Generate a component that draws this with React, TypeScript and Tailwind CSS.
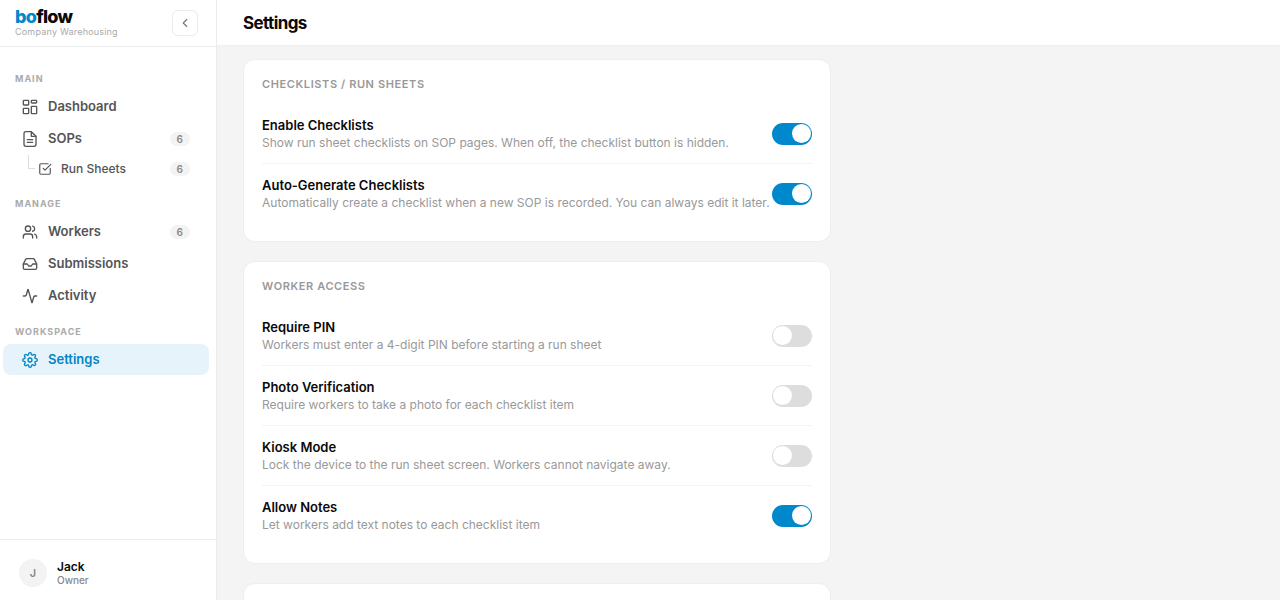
import { useState } from 'react'
import type { ComponentType, ReactNode } from 'react'
import { Activity, ChevronLeft, Inbox, SquareCheckBig, Users } from 'lucide-react'
import { FiSettings } from 'react-icons/fi'
import clsx from 'clsx'

interface IconProps {
    size?: number | string
}

interface NavItemProps {
    icon: ComponentType<IconProps>
    label: string
    count?: number
    active?: boolean
}

function DashboardIcon({ size = 16 }: IconProps) {
    return (
        <svg width={size} height={size} viewBox="0 0 24 24" fill="none" stroke="currentColor" strokeWidth="2" strokeLinejoin="round">
            <rect x="2" y="2" width="8" height="7" rx="1" />
            <rect x="14" y="2" width="8" height="4" rx="1" />
            <rect x="14" y="11" width="8" height="11" rx="1" />
            <rect x="2" y="14" width="8" height="8" rx="1" />
        </svg>
    )
}

function DocumentIcon({ size = 16 }: IconProps) {
    return (
        <svg
            width={size}
            height={size}
            viewBox="0 0 24 24"
            fill="none"
            stroke="currentColor"
            strokeWidth="2"
            strokeLinecap="round"
            strokeLinejoin="round"
        >
            <path d="M14 1H6a3 3 0 0 0-3 3v16a3 3 0 0 0 3 3h12a3 3 0 0 0 3-3V8z" />
            <path d="M14 1v7h7" />
            <path d="M8 13h8M8 17h8" />
        </svg>
    )
}

function Count({ value }: { value: number }) {
    return (
        <span className="ml-auto rounded-full bg-[#f3f3f3] px-[7px] text-[10px] leading-[14px] font-semibold text-[#888]">
            {value}
        </span>
    )
}

function NavItem({ icon: Icon, label, count, active }: NavItemProps) {
    return (
        <a
            href="#"
            aria-current={active ? 'page' : undefined}
            className={clsx(
                'flex h-[31px] items-center gap-[10px] rounded-lg px-[19px] text-[13px] font-semibold',
                active ? 'bg-[#e6f3fb] text-[#0284c7]' : 'text-[#555]'
            )}
        >
            <Icon size={16} />
            {label}
            {count !== undefined && <Count value={count} />}
        </a>
    )
}

function SubNavItem({ icon: Icon, label, count }: NavItemProps) {
    return (
        <a href="#" className="relative flex h-7 items-center gap-[9px] pr-[19px] pl-[35px] text-[12px] font-medium text-[#555]">
            <span className="absolute top-0 left-[25px] h-[14px] w-[7px] border-b border-l border-[#ddd]" />
            <Icon size={14} />
            {label}
            {count !== undefined && <Count value={count} />}
        </a>
    )
}

function NavGroup({ title, children }: { title: string; children: ReactNode }) {
    return (
        <div className="flex flex-col gap-px">
            <h2 className="px-3 pb-[5px] text-[9px] leading-3 font-bold tracking-[1px] text-[#aaa]">{title}</h2>
            {children}
        </div>
    )
}

function Sidebar() {
    return (
        <aside className="flex w-[217px] shrink-0 flex-col border-r border-[#ebebeb] bg-white">
            <div className="flex h-[47px] shrink-0 items-center justify-between border-b border-[#ebebeb] pr-[18px] pl-[15px]">
                <div>
                    <div className="text-[18px] leading-[18px] font-extrabold tracking-[-0.7px] text-[#0a0a0a]">
                        <span className="text-[#0088cc]">bo</span>flow
                    </div>
                    <div className="text-[9px] leading-3 tracking-[0.2px] text-[#aaa]">Company Warehousing</div>
                </div>
                <button
                    type="button"
                    aria-label="Collapse sidebar"
                    className="flex size-[26px] items-center justify-center rounded-md border border-[#ebebeb] text-[#777]"
                >
                    <ChevronLeft size={14} />
                </button>
            </div>
            <nav className="flex flex-1 flex-col gap-[15px] pt-[26px] pr-[7px] pl-[3px]">
                <NavGroup title="MAIN">
                    <NavItem icon={DashboardIcon} label="Dashboard" />
                    <NavItem icon={DocumentIcon} label="SOPs" count={6} />
                    <SubNavItem icon={SquareCheckBig} label="Run Sheets" count={6} />
                </NavGroup>
                <NavGroup title="MANAGE">
                    <NavItem icon={Users} label="Workers" count={6} />
                    <NavItem icon={Inbox} label="Submissions" />
                    <NavItem icon={Activity} label="Activity" />
                </NavGroup>
                <NavGroup title="WORKSPACE">
                    <NavItem icon={FiSettings} label="Settings" active />
                </NavGroup>
            </nav>
            <div className="flex shrink-0 items-center gap-[10px] border-t border-[#ebebeb] px-[19px] pt-[19px] pb-[13px]">
                <div className="flex size-7 items-center justify-center rounded-full bg-[#f3f3f3] text-[11px] font-semibold text-[#888]">
                    J
                </div>
                <div>
                    <div className="text-[12px] leading-[14px] font-semibold text-[#0a0a0a]">Jack</div>
                    <div className="text-[10px] leading-3 font-medium text-[#888]">Owner</div>
                </div>
            </div>
        </aside>
    )
}

interface SettingRowProps {
    id: string
    title: string
    description: string
    defaultOn?: boolean
}

function SettingRow({ id, title, description, defaultOn = false }: SettingRowProps) {
    const [on, setOn] = useState(defaultOn)

    return (
        <div className="flex items-center justify-between border-b border-[#f3f3f3] py-3 last:border-b-0">
            <div>
                <label htmlFor={id} className="block text-[13px] leading-[18px] font-semibold text-[#0a0a0a]">
                    {title}
                </label>
                <p id={`${id}-hint`} className="text-[12px] leading-[17px] text-[#999]">
                    {description}
                </p>
            </div>
            <input
                id={id}
                type="checkbox"
                role="switch"
                aria-describedby={`${id}-hint`}
                checked={on}
                onChange={(e) => setOn(e.target.checked)}
                className="flex h-[22px] w-10 shrink-0 cursor-pointer appearance-none items-center rounded-full bg-[#ddd] px-px before:size-[19px] before:rounded-full before:bg-white checked:justify-end checked:bg-[#0088cc]"
            />
        </div>
    )
}

function SettingsCard({ title, rows }: { title: string; rows: SettingRowProps[] }) {
    return (
        <section className="rounded-xl border border-[#eeeeee] bg-white p-[18px]">
            <h2 className="mb-[14px] text-[11px] leading-3 font-semibold tracking-[0.6px] text-[#999]">{title}</h2>
            <div>
                {rows.map((row) => (
                    <SettingRow key={row.id} {...row} />
                ))}
            </div>
        </section>
    )
}

const checklistRows: SettingRowProps[] = [
    {
        id: 'enable-checklists',
        title: 'Enable Checklists',
        description: 'Show run sheet checklists on SOP pages. When off, the checklist button is hidden.',
        defaultOn: true,
    },
    {
        id: 'auto-generate',
        title: 'Auto-Generate Checklists',
        description: 'Automatically create a checklist when a new SOP is recorded. You can always edit it later.',
        defaultOn: true,
    },
]

const accessRows: SettingRowProps[] = [
    { id: 'require-pin', title: 'Require PIN', description: 'Workers must enter a 4-digit PIN before starting a run sheet' },
    { id: 'photo', title: 'Photo Verification', description: 'Require workers to take a photo for each checklist item' },
    { id: 'kiosk', title: 'Kiosk Mode', description: 'Lock the device to the run sheet screen. Workers cannot navigate away.' },
    { id: 'notes', title: 'Allow Notes', description: 'Let workers add text notes to each checklist item', defaultOn: true },
]

export default function App() {
    return (
        <div className="flex h-screen bg-[#f4f4f4] font-['Inter',sans-serif]">
            <Sidebar />
            <div className="flex min-w-0 flex-1 flex-col">
                <header className="flex h-[46px] shrink-0 items-center border-b border-[#f0f0f0] bg-white px-[26px]">
                    <h1 className="text-[17px] leading-5 font-bold tracking-[-0.6px] text-[#0a0a0a]">Settings</h1>
                </header>
                <main className="flex-1 overflow-y-auto px-[26px] py-[13px] [scrollbar-width:none]">
                    <div className="flex max-w-[588px] flex-col gap-[19px]">
                        <SettingsCard title="CHECKLISTS / RUN SHEETS" rows={checklistRows} />
                        <SettingsCard title="WORKER ACCESS" rows={accessRows} />
                        <section className="h-40 rounded-xl border border-[#eeeeee] bg-white" />
                    </div>
                </main>
            </div>
        </div>
    )
}
